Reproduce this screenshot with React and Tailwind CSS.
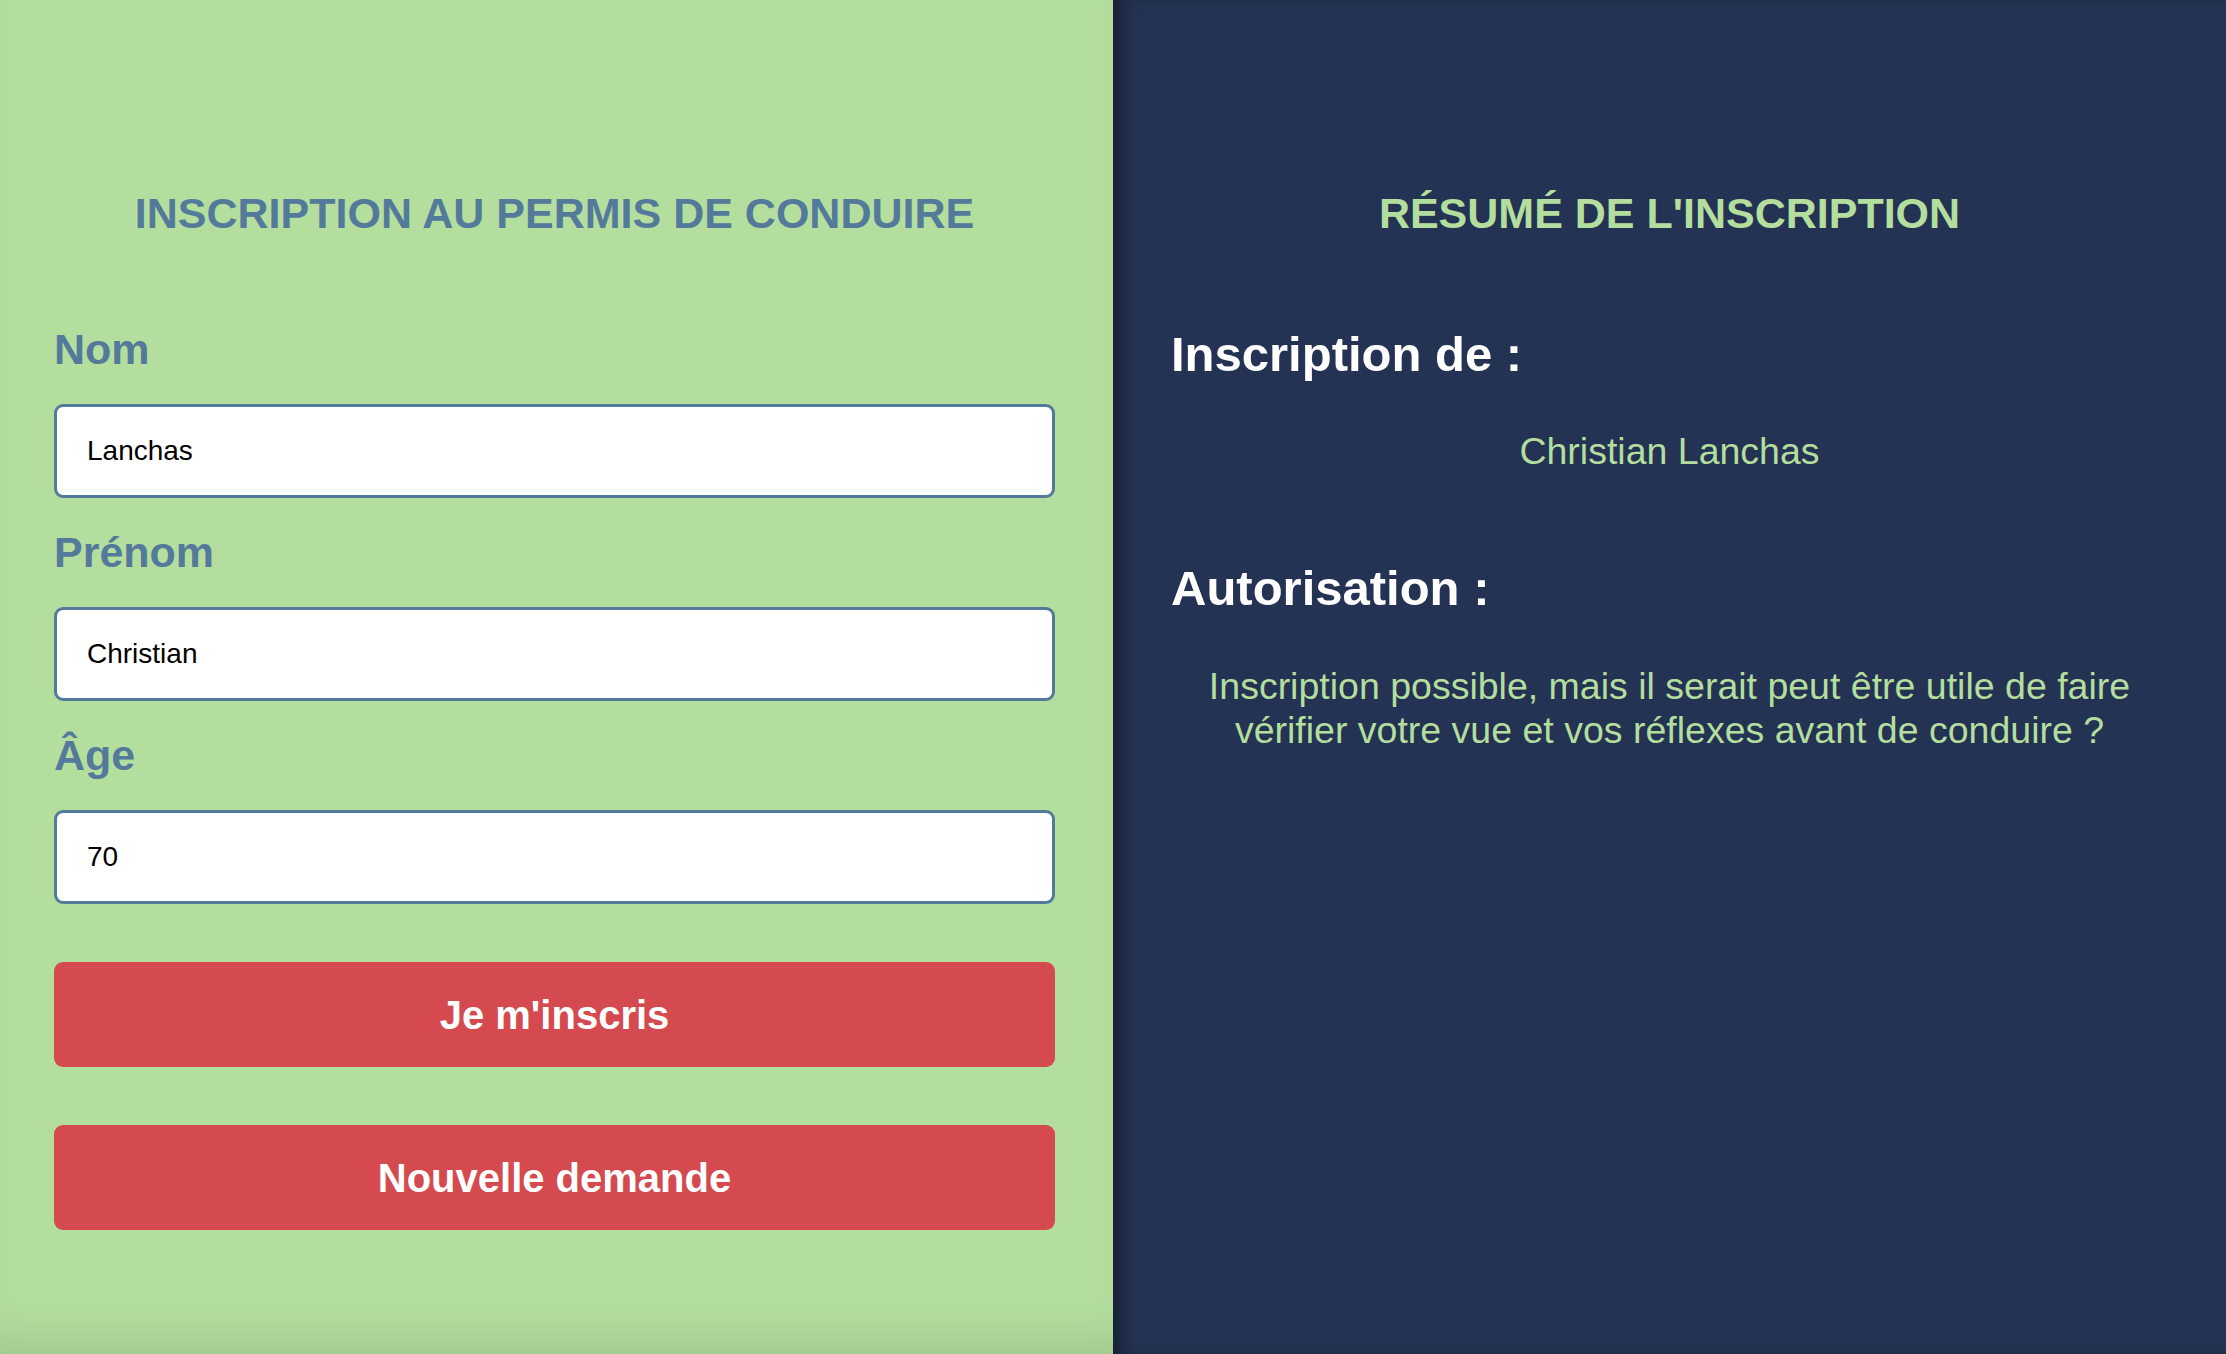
export default function App() {
  const labelCls = "block text-[43px] leading-[48px] font-bold text-[#547a9b]";
  const inputCls =
    "w-full h-[94px] bg-white border-[3px] border-[#547a9b] rounded-[9px] px-[30px] text-[28px] text-black focus:outline-none";
  const buttonCls =
    "w-full h-[105px] rounded-[9px] bg-[#d44a4e] text-white text-[40px] font-bold flex items-center justify-center";

  return (
    <div className="h-screen w-full flex overflow-hidden font-['Liberation_Sans',Arial,sans-serif]">
      <div className="w-1/2 bg-[#b4de9e] pl-[54px] pr-[58px] pt-[189px] shadow-[inset_0_-40px_50px_-30px_rgba(0,0,0,0.12)]">
        <h1 className="text-[43px] leading-[48px] font-bold text-[#547a9b] text-center uppercase">
          Inscription au permis de conduire
        </h1>

        <form className="mt-[88px]" onSubmit={(e) => e.preventDefault()}>
          <label className={labelCls}>Nom</label>
          <input type="text" defaultValue="Lanchas" className={`${inputCls} mt-[31px] mb-[30px]`} />

          <label className={labelCls}>Prénom</label>
          <input type="text" defaultValue="Christian" className={`${inputCls} mt-[31px] mb-[30px]`} />

          <label className={labelCls}>Âge</label>
          <input type="text" defaultValue="70" className={`${inputCls} mt-[31px]`} />

          <div className="mt-[58px] flex flex-col gap-[58px]">
            <button type="submit" className={buttonCls}>Je m'inscris</button>
            <button type="button" className={buttonCls}>Nouvelle demande</button>
          </div>
        </form>
      </div>

      <div className="w-1/2 bg-[#243353] px-[58px] pt-[189px] shadow-[inset_16px_0_20px_-10px_rgba(0,0,0,0.45)]">
        <h2 className="text-[43px] leading-[48px] font-bold text-[#b4de9e] text-center uppercase">
          Résumé de l'inscription
        </h2>

        <h3 className="mt-[89px] text-[49px] leading-[56px] font-bold text-white">Inscription de :</h3>
        <p className="mt-[47px] text-[37.5px] leading-[44px] text-[#b4de9e] text-center">Christian Lanchas</p>

        <h3 className="mt-[87px] text-[49px] leading-[56px] font-bold text-white">Autorisation :</h3>
        <p className="mt-[48px] text-[37.5px] leading-[44px] text-[#b4de9e] text-center">
          Inscription possible, mais il serait peut être utile de faire vérifier votre vue et vos réflexes avant de conduire ?
        </p>
      </div>
    </div>
  );
}
